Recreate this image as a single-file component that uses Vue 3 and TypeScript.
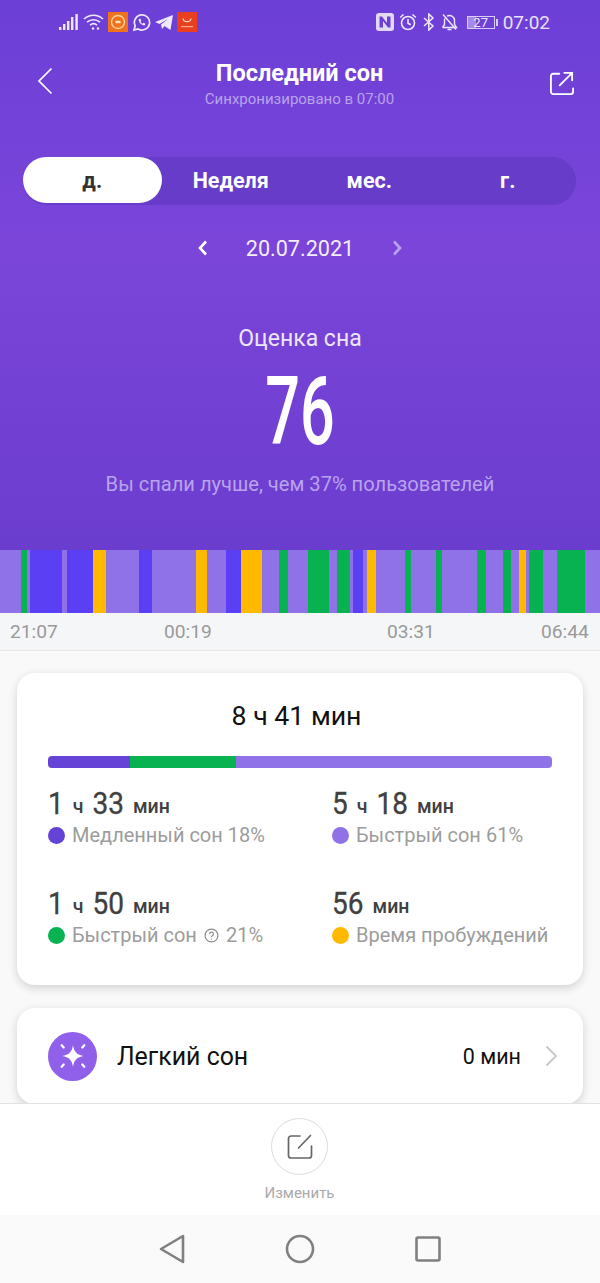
<script setup lang="ts">
type Phase = 'light' | 'deep' | 'rem' | 'wake'

const tabs = ['д.', 'Неделя', 'мес.', 'г.']

// end x of every block on the night strip
const blocks: Array<[Phase, number]> = [
  ['light', 21], ['rem', 27], ['light', 30], ['deep', 62], ['light', 67], ['deep', 93], ['wake', 106],
  ['light', 139], ['deep', 152], ['light', 196], ['wake', 207], ['light', 226], ['deep', 241], ['wake', 262],
  ['light', 279], ['rem', 288], ['light', 308], ['rem', 329], ['light', 337], ['rem', 350], ['light', 353],
  ['deep', 363], ['light', 367], ['wake', 376], ['light', 405], ['rem', 411], ['light', 436], ['rem', 442],
  ['light', 477], ['rem', 486], ['light', 503], ['rem', 511], ['light', 519], ['wake', 526], ['light', 529],
  ['rem', 543], ['light', 557], ['rem', 585], ['light', 600]
]

const strip = blocks.map(([phase, end], i) => ({
  phase,
  width: end - (i ? blocks[i - 1][1] : 0)
}))

const stats = [
  { parts: ['1', 'ч', '33', 'мин'], phase: 'deep', label: 'Медленный сон', tail: '18%', help: false },
  { parts: ['5', 'ч', '18', 'мин'], phase: 'light', label: 'Быстрый сон', tail: '61%', help: false },
  { parts: ['1', 'ч', '50', 'мин'], phase: 'rem', label: 'Быстрый сон', tail: '21%', help: true },
  { parts: ['56', 'мин'], phase: 'wake', label: 'Время пробуждений', tail: '', help: false }
]
</script>

<template>
  <div class="screen">
    <div class="content">
      <header class="hero">
        <div class="status">
          <svg class="ic" width="20" height="18" viewBox="0 0 20 18" fill="#efe9fc">
            <rect x="0" y="14" width="2.4" height="3" /><rect x="4" y="11" width="2.4" height="6" />
            <rect x="8" y="8" width="2.4" height="9" /><rect x="12" y="4" width="2.4" height="13" />
            <rect x="16.4" y="1" width="2.4" height="16" />
          </svg>
          <svg class="ic wifi" width="21" height="18" viewBox="0 0 21 18" fill="none" stroke="#efe9fc" stroke-width="1.6">
            <path d="M1 6c5.500-5 13.500-5 19 0M4 9.200c3.800-3.300 9.200-3.300 13 0M7 12.200c2.200-1.800 5-1.800 7 0" />
            <circle cx="10" cy="15.500" r="1.200" fill="#efe9fc" stroke="none" />
            <circle cx="15" cy="15.500" r="1.200" fill="#efe9fc" stroke="none" />
          </svg>
          <svg class="ic" width="20" height="20" viewBox="0 0 20 20">
            <rect width="20" height="20" fill="#f0731c" />
            <circle cx="10" cy="10" r="6.500" fill="none" stroke="#ffd9a8" stroke-width="1.300" />
            <rect x="7.500" y="8.800" width="5" height="2.400" fill="#ffe5c4" />
          </svg>
          <svg class="ic" width="19" height="19" viewBox="0 0 19 19" fill="none" stroke="#efe9fc" stroke-width="1.700">
            <path d="M2 17l1.200-4.200A7.600 7.600 0 1 1 6.200 16z" />
            <path d="M6.800 6c-.8 2.800 3 6.800 6 6.300l.6-1.500-2-1-.9.900c-.9-.4-1.700-1.200-2-2.100l.8-.9-.9-2z" fill="#efe9fc" stroke="none" />
          </svg>
          <svg class="ic" width="18" height="17" viewBox="0 0 18 17" fill="#efe9fc">
            <path d="M0 8L18 1 15.500 16 9.500 12l-2.500 3-1-4.500L13 5 4.500 10z" />
          </svg>
          <svg class="ic" width="20" height="20" viewBox="0 0 20 20">
            <rect width="20" height="20" fill="#e8401f" />
            <path d="M6 6.500c.6 4.200 7.400 4.200 8 0" fill="none" stroke="#ffe0d0" stroke-width="1.200" />
            <rect x="4" y="14" width="12" height="1.200" fill="#f8a58d" />
          </svg>

          <div class="status-right">
            <svg class="ic" width="18" height="18" viewBox="0 0 18 18">
              <rect width="18" height="18" rx="3" fill="#e4daf8" />
              <path d="M3.500 3.500v11l3.500-.1V8l5 6.500h2.500V3.500l-3.500.1V10L6 3.500z" fill="#6c3fd6" />
            </svg>
            <svg class="ic" width="18" height="18" viewBox="0 0 18 18" fill="none" stroke="#efe9fc" stroke-width="1.600">
              <circle cx="9" cy="10" r="6.500" />
              <path d="M9 6v4.300l2.800 1.500M1.200 4.500L4.500 1.500M16.800 4.500L13.500 1.500" />
            </svg>
            <svg class="ic" width="14" height="18" viewBox="0 0 14 18" fill="none" stroke="#efe9fc" stroke-width="1.500">
              <path d="M2 5l9 8-4.200 4V1L11 5l-9 8" />
            </svg>
            <svg class="ic" width="17" height="18" viewBox="0 0 17 18" fill="none" stroke="#efe9fc" stroke-width="1.400">
              <path d="M1.500 14.500h14l-2-3V7.500a5 5 0 0 0-7.500-4.300M4 5.500c-.4.700-.5 1.300-.5 2v4l-2 3M6.500 16.500h4M2 1.500l13 15" />
            </svg>
            <div class="battery"><span class="charge"></span><span class="level">27</span></div>
            <span class="battery-nub"></span>
            <span class="clock">07:02</span>
          </div>
        </div>

        <div class="topbar">
          <svg class="back" width="16" height="28" viewBox="0 0 16 28" fill="none" stroke="#fff" stroke-width="1.700">
            <path d="M14.500 1.500L2 14l12.500 12.500" />
          </svg>
          <div class="heading">
            <h1>Последний сон</h1>
            <p>Синхронизировано в 07:00</p>
          </div>
          <svg class="share" width="24" height="24" viewBox="0 0 26 26" fill="none" stroke="#fff" stroke-width="2" stroke-linecap="round">
            <path d="M10 3H3.500A2.500 2.500 0 0 0 1 5.500v17A2.500 2.500 0 0 0 3.500 25h19a2.500 2.500 0 0 0 2.500-2.500V19" />
            <path d="M10.500 15.500L24 2M15.500 2H24v8" />
          </svg>
        </div>

        <div class="tabs">
          <button v-for="(tab, i) in tabs" :key="tab" class="tab" :class="{ active: i === 0 }">{{ tab }}</button>
        </div>

        <div class="dates">
          <svg width="10" height="16" viewBox="0 0 10 16" fill="none" stroke="#fff" stroke-width="2.600">
            <path d="M8 1.500L2 8l6 6.500" />
          </svg>
          <span>20.07.2021</span>
          <svg width="10" height="16" viewBox="0 0 10 16" fill="none" stroke="#b9a3ee" stroke-width="2.600">
            <path d="M2 1.500L8 8l-6 6.500" />
          </svg>
        </div>

        <div class="score">
          <div class="score-title">Оценка сна</div>
          <div class="score-value">76</div>
          <div class="score-note">Вы спали лучше, чем 37% пользователей</div>
        </div>
      </header>

      <div class="strip">
        <span
          v-for="(item, i) in strip"
          :key="i"
          :class="item.phase"
          :style="{ width: item.width + 'px' }"
        ></span>
      </div>
      <div class="times">
        <span>21:07</span><span>00:19</span><span>03:31</span><span>06:44</span>
      </div>

      <section class="card summary">
        <div class="total">8 ч 41 мин</div>
        <div class="total-bar">
          <span class="deep part-deep"></span>
          <span class="rem part-rem"></span>
          <span class="light part-light"></span>
        </div>
        <div class="stats">
          <div v-for="stat in stats" :key="stat.label + stat.tail" class="stat">
            <div class="amount">
              <span
                v-for="(part, i) in stat.parts"
                :key="i"
                :class="/\d/.test(part) ? 'num' : 'unit'"
              >{{ part }}</span>
            </div>
            <div class="legend">
              <i class="dot" :class="stat.phase"></i>
              <span>{{ stat.label }}</span>
              <svg v-if="stat.help" class="help" width="15" height="15" viewBox="0 0 14 14" fill="none" stroke="#8a8a8a" stroke-width="1.100">
                <circle cx="7" cy="7" r="6" />
                <path d="M5.200 5.600a1.800 1.800 0 1 1 2.600 1.600c-.6.300-.8.600-.8 1.200" />
                <circle cx="7" cy="10.300" r=".6" fill="#8a8a8a" stroke="none" />
              </svg>
              <span v-if="stat.tail">{{ stat.tail }}</span>
            </div>
          </div>
        </div>
      </section>

      <section class="card light-row">
        <div class="badge">
          <svg width="34" height="34" viewBox="0 0 30 30" fill="#fff">
            <path d="M15 5.500c1 6 3.500 8.500 9.500 9.500-6 1-8.500 3.500-9.500 9.500-1-6-3.500-8.500-9.500-9.500 6-1 8.500-3.500 9.500-9.500z" />
            <g stroke="#fff" stroke-width="2" stroke-linecap="round">
              <path d="M5 5.500l1.800 2M25 5.500l-1.800 2M5 24.500l1.800-2M25 24.500l-1.800-2" />
            </g>
          </svg>
        </div>
        <span class="row-title">Легкий сон</span>
        <span class="row-value">0 мин</span>
        <svg width="13" height="22" viewBox="0 0 13 22" fill="none" stroke="#c8c8c8" stroke-width="1.800">
          <path d="M1.500 1.500L11 11l-9.500 9.500" />
        </svg>
      </section>
    </div>

    <footer class="actions">
      <div class="edit">
        <svg width="26" height="26" viewBox="0 0 26 26" fill="none" stroke="#666" stroke-width="1.700" stroke-linecap="round">
          <path d="M13 2H4a2.500 2.500 0 0 0-2.500 2.500v17A2.500 2.500 0 0 0 4 24h18a2.500 2.500 0 0 0 2.500-2.500V12" />
          <path d="M11.500 14L23.500 1.500" />
        </svg>
      </div>
      <span>Изменить</span>
    </footer>

    <nav class="navbar">
      <svg width="26" height="30" viewBox="0 0 26 30" fill="none" stroke="#808080" stroke-width="2.600" stroke-linejoin="round">
        <path d="M24 2v26L2 15z" />
      </svg>
      <svg width="30" height="30" viewBox="0 0 30 30" fill="none" stroke="#808080" stroke-width="2.600">
        <circle cx="15" cy="15" r="13" />
      </svg>
      <svg width="26" height="26" viewBox="0 0 26 26" fill="none" stroke="#808080" stroke-width="2.600" stroke-linejoin="round">
        <rect x="1.500" y="1.500" width="23" height="23" rx="1.500" />
      </svg>
    </nav>
  </div>
</template>

<style>
body {
  margin: 0;
}
</style>

<style scoped>
.screen {
  width: 600px;
  height: 1283px;
  display: flex;
  flex-direction: column;
  overflow: hidden;
  background: #f9f9fa;
  font-family: Roboto, "Noto Sans", sans-serif;
}

.content {
  flex: 1;
  min-height: 0;
  overflow: hidden;
}

.hero {
  height: 550px;
  box-sizing: border-box;
  background: linear-gradient(180deg, #6c3fd6 0%, #7b45da 45%, #6b3dce 100%);
  color: #fff;
}

.status {
  height: 44px;
  padding: 0 50px 0 59px;
  display: flex;
  align-items: center;
  gap: 4px;
}

.ic {
  flex: none;
  display: block;
}

.status-right {
  margin-left: auto;
  display: flex;
  align-items: center;
  gap: 5px;
}

.battery {
  position: relative;
  margin-left: 4px;
  width: 28px;
  height: 13px;
  border: 1px solid #d9ccf6;
  box-sizing: border-box;
  font-size: 13px;
  line-height: 11px;
  text-align: center;
  color: #efe9fc;
}

.charge {
  position: absolute;
  left: 0;
  top: 0;
  bottom: 0;
  width: 8px;
  background: #a68ae8;
}

.level {
  position: relative;
}

.battery-nub {
  width: 2px;
  height: 7px;
  margin-left: -4px;
  background: #d9ccf6;
}

.clock {
  font-size: 19px;
  color: #e9e1fb;
}

.topbar {
  height: 60px;
  margin-top: 10px;
  padding: 0 26px 0 37px;
  display: flex;
  align-items: center;
}

.back {
  flex: none;
  margin-top: -7px;
}

.heading {
  flex: 1;
  text-align: center;
  padding-right: 4px;
}

.heading h1 {
  margin: 0;
  font-size: 23.5px;
  line-height: 26px;
  font-weight: 700;
}

.heading p {
  margin: 4px 0 0;
  font-size: 15px;
  line-height: 18px;
  color: #b9a3ee;
}

.share {
  flex: none;
  margin-top: -2px;
}

.tabs {
  margin: 43px 24px 0 23px;
  height: 48px;
  display: grid;
  grid-template-columns: repeat(4, 138.5px);
  border-radius: 24px;
  background: #673cc8;
}

.tab {
  height: 46px;
  padding: 0;
  border: 0;
  border-radius: 23px;
  background: transparent;
  color: #fff;
  font: 700 21.5px Roboto, sans-serif;
}

.tab.active {
  background: #fff;
  color: #333;
}

.dates {
  margin-top: 27px;
  height: 32px;
  display: flex;
  align-items: center;
  justify-content: center;
  gap: 38px;
  font-size: 21.6px;
  color: #f3eefd;
}

.score {
  margin-top: 61px;
  text-align: center;
}

.score-title {
  font-size: 23px;
  line-height: 28px;
  color: #ede6fb;
}

.score-value {
  height: 92px;
  margin-top: 13px;
  font-size: 94px;
  font-weight: 500;
  line-height: 92px;
  transform: scaleX(0.65);
}

.score-note {
  margin-top: 14px;
  font-size: 20.1px;
  line-height: 24px;
  color: #b9a3ee;
}

.strip {
  display: flex;
  height: 63px;
}

.strip span {
  flex: none;
}

.light {
  background: #8f72e8;
}

.deep {
  background: #5a3ff5;
}

.rem {
  background: #08b251;
}

.wake {
  background: #ffba00;
}

.times {
  height: 38px;
  box-sizing: border-box;
  padding-left: 10px;
  display: grid;
  grid-template-columns: 154px 223px 154px auto;
  align-items: center;
  background: #f5f6f8;
  border-bottom: 1px solid #e8e9eb;
  font-size: 19.2px;
  color: #9a9a9a;
}

.card {
  margin: 0 17px;
  background: #fff;
  border-radius: 18px;
  box-shadow: 0 3px 10px rgba(0, 0, 0, 0.16);
}

.summary {
  margin-top: 22px;
  height: 312px;
  box-sizing: border-box;
  padding: 28px 31px 0;
}

.total {
  text-align: center;
  font-size: 26.7px;
  line-height: 30px;
  color: #111;
  padding-right: 7px;
}

.total-bar {
  margin-top: 25px;
  height: 12px;
  display: flex;
  border-radius: 4px;
  overflow: hidden;
}

.part-deep {
  width: 82px;
  background: #6443d6;
}

.part-rem {
  width: 106px;
}

.part-light {
  flex: 1;
}

.stats {
  margin-top: 19px;
  display: grid;
  grid-template-columns: 284px auto;
  row-gap: 40px;
}

.amount {
  height: 34px;
  display: flex;
  align-items: baseline;
  gap: 9px;
  color: #404040;
}

.num {
  display: inline-block;
  font-size: 28px;
  line-height: 34px;
  -webkit-text-stroke: 0.3px #404040;
  transform: scaleY(1.14);
}

.unit {
  font-size: 19.5px;
  font-weight: 500;
}

.legend {
  height: 24px;
  margin-top: 2px;
  display: flex;
  align-items: center;
  gap: 7px;
  font-size: 20px;
  color: #9c9c9c;
  white-space: nowrap;
}

.legend span + span {
  margin-left: -2px;
}

.dot {
  flex: none;
  width: 17px;
  height: 17px;
  border-radius: 50%;
}

.dot.deep {
  background: #6443d6;
}

.help {
  flex: none;
}

.light-row {
  margin-top: 23px;
  height: 96px;
  box-sizing: border-box;
  padding: 0 25px 0 31px;
  display: flex;
  align-items: center;
  font-size: 24.9px;
  color: #111;
}

.badge {
  width: 49px;
  height: 49px;
  margin-right: 20px;
  flex: none;
  display: flex;
  align-items: center;
  justify-content: center;
  border-radius: 50%;
  background: #9060ea;
}

.row-title {
  flex: 1;
}

.row-value {
  margin-right: 24px;
  font-size: 21.5px;
}

.actions {
  flex: none;
  height: 112px;
  box-sizing: border-box;
  padding: 14px 1px 0 0;
  display: flex;
  flex-direction: column;
  align-items: center;
  background: #fff;
  border-top: 1px solid #e2e2e2;
  font-size: 15px;
  color: #aaa;
}

.edit {
  width: 57px;
  height: 57px;
  box-sizing: border-box;
  margin-bottom: 9px;
  display: flex;
  align-items: center;
  justify-content: center;
  border: 1px solid #dcdcdc;
  border-radius: 50%;
}

.navbar {
  flex: none;
  height: 68px;
  padding: 0 159px 0 159px;
  display: flex;
  align-items: center;
  justify-content: space-between;
  background: #fafafa;
}
</style>
